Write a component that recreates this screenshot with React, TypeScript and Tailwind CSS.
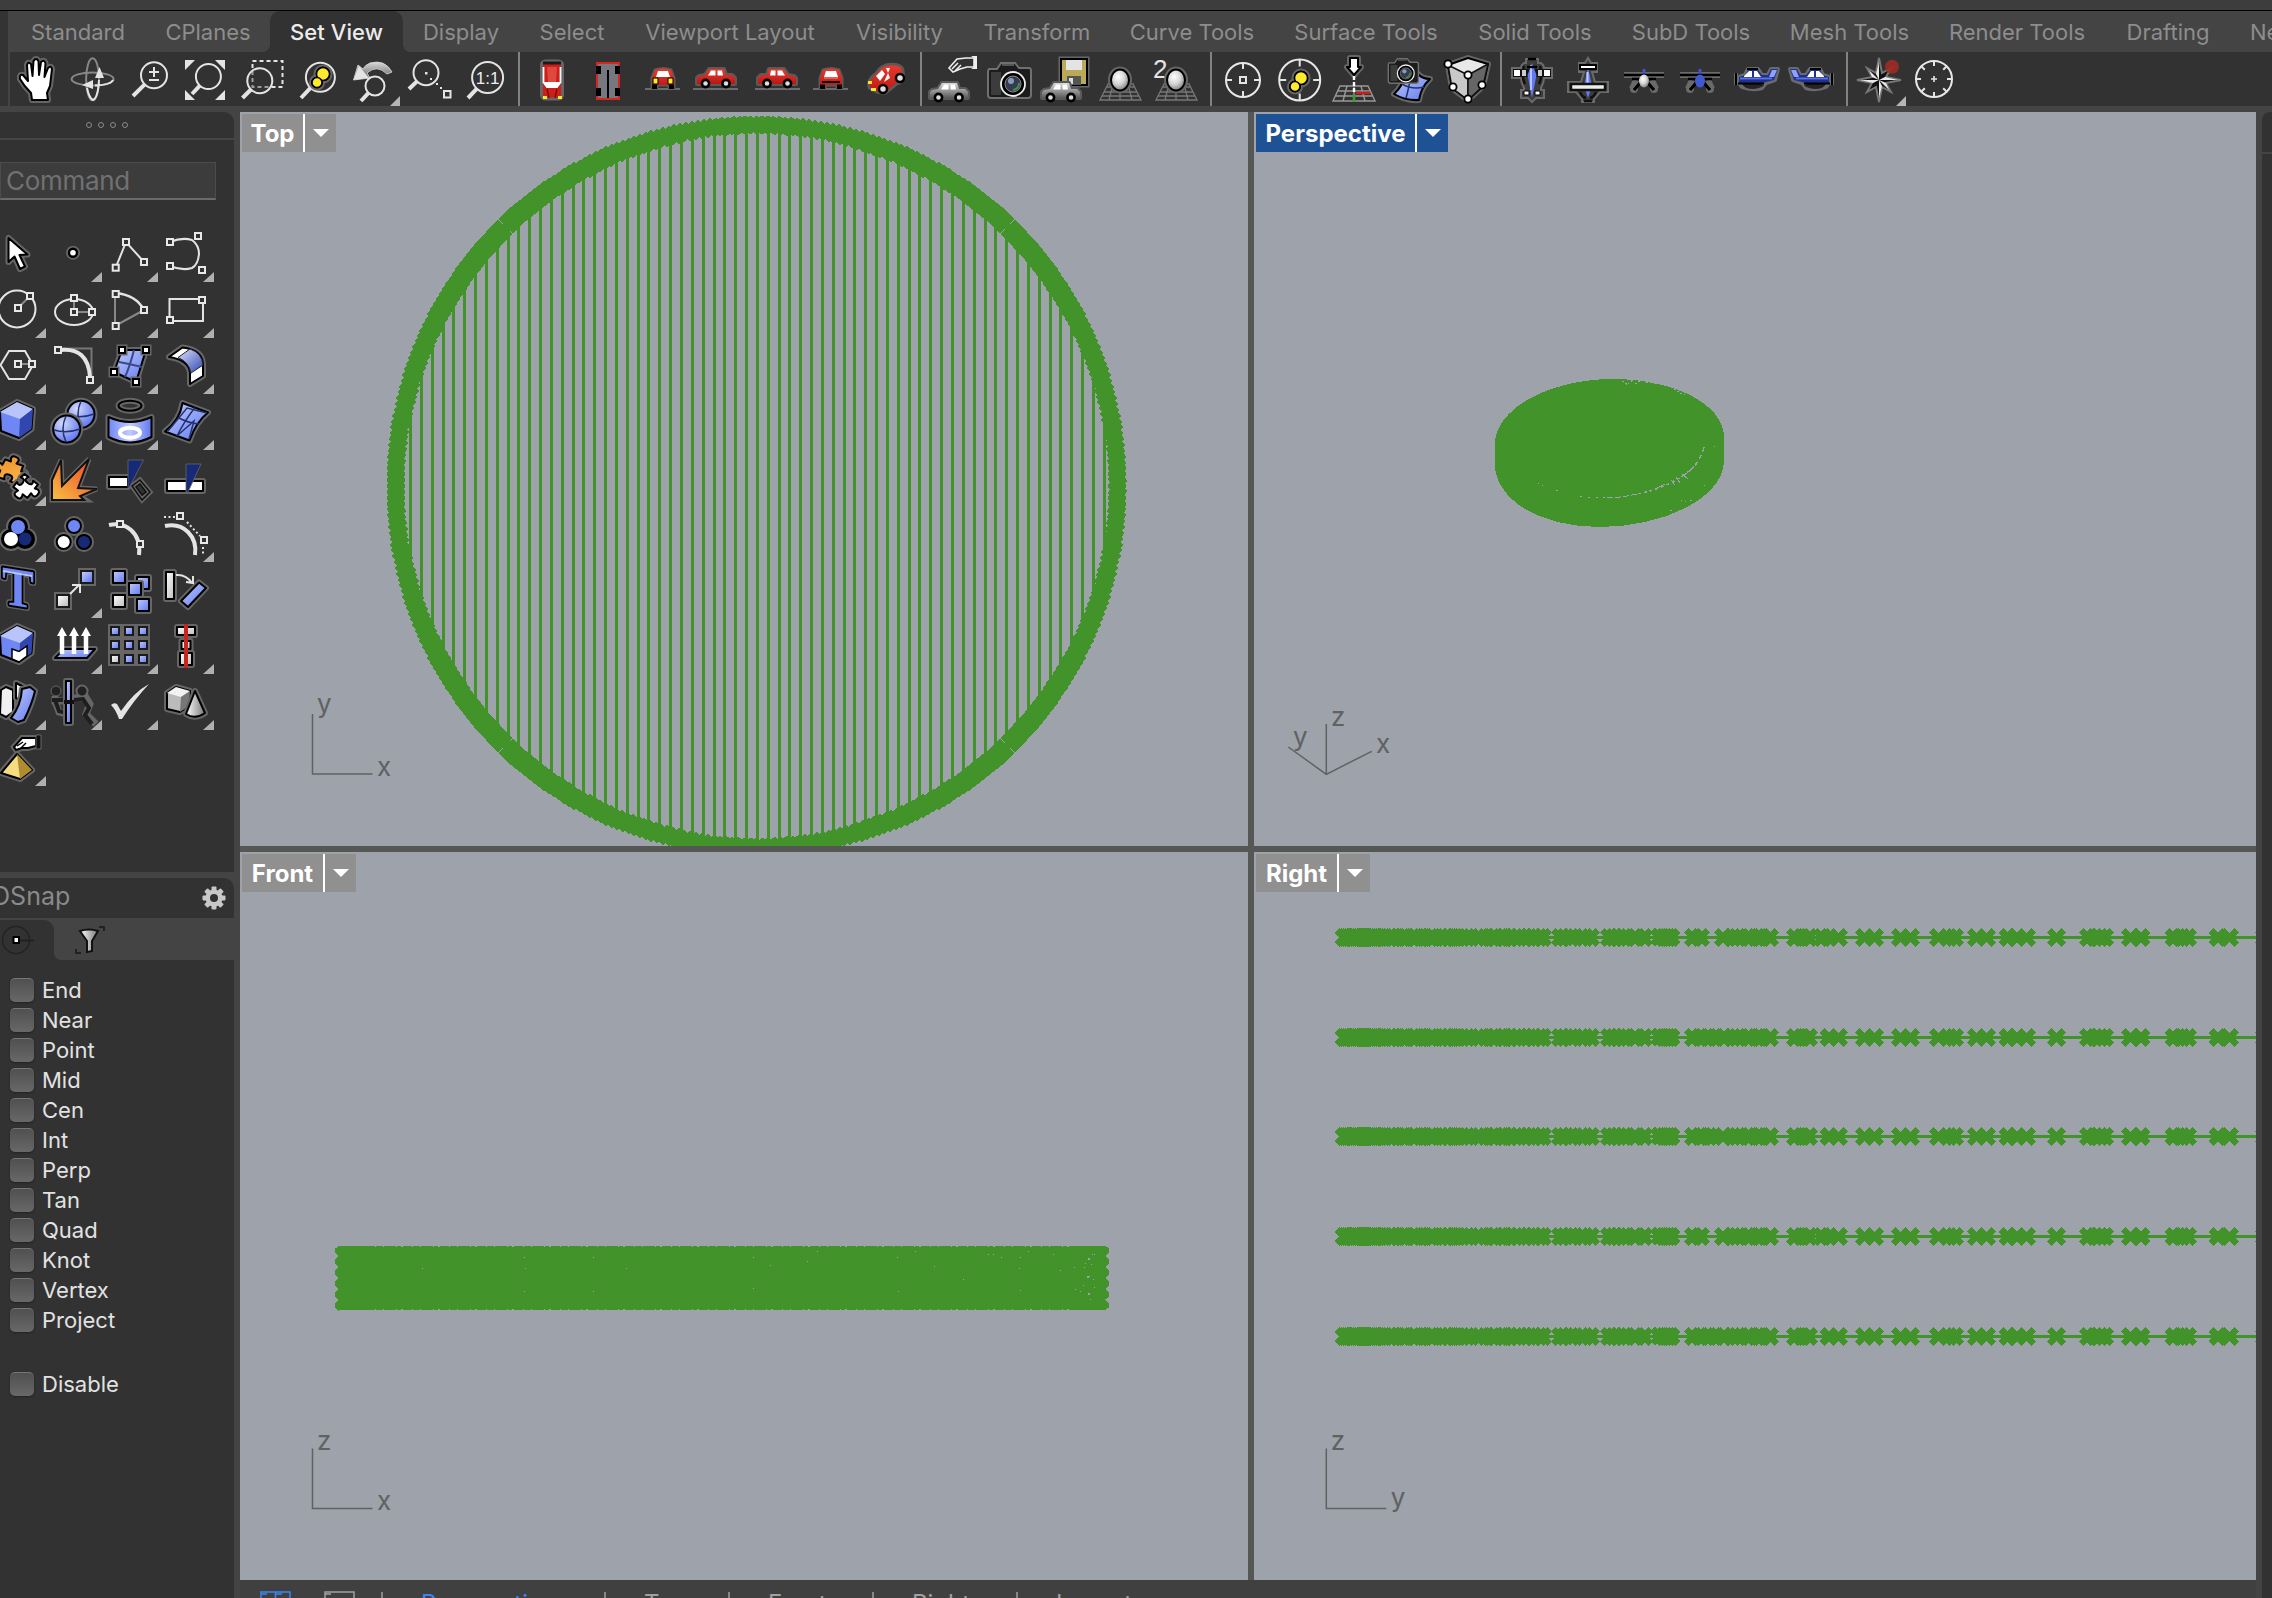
import React from "react";

const GREEN = "#429329";

/* ---------- drawing helpers ---------- */

function Defs() {
  return (
    <svg className="absolute h-0 w-0" aria-hidden="true">
      <defs>
        <linearGradient id="blue" x1="0" y1="0" x2="1" y2="1">
          <stop offset="0" stopColor="#c3ccfb" />
          <stop offset="1" stopColor="#5f79f2" />
        </linearGradient>
        <linearGradient id="blueH" x1="0" y1="0" x2="1" y2="0">
          <stop offset="0" stopColor="#6f87f5" />
          <stop offset="0.5" stopColor="#c3ccfb" />
          <stop offset="1" stopColor="#5f79f2" />
        </linearGradient>
        <linearGradient id="bend" x1="0" y1="0" x2="1" y2="1">
          <stop offset="0" stopColor="#dfe4fd" />
          <stop offset="1" stopColor="#2f46ae" />
        </linearGradient>
        <linearGradient id="red" x1="0" y1="0" x2="0" y2="1">
          <stop offset="0" stopColor="#ea3a30" />
          <stop offset="1" stopColor="#b81812" />
        </linearGradient>
        <linearGradient id="gray" x1="0" y1="0" x2="1" y2="1">
          <stop offset="0" stopColor="#ffffff" />
          <stop offset="1" stopColor="#bdbdbd" />
        </linearGradient>
        <linearGradient id="grayV" x1="0" y1="0" x2="0" y2="1">
          <stop offset="0" stopColor="#d8d8d8" />
          <stop offset="1" stopColor="#5a5a5a" />
        </linearGradient>
        <linearGradient id="cone" x1="0" y1="0" x2="1" y2="0">
          <stop offset="0" stopColor="#ffffff" />
          <stop offset="1" stopColor="#777777" />
        </linearGradient>
        <linearGradient id="fire" x1="1" y1="0" x2="0" y2="1">
          <stop offset="0" stopColor="#e8401c" />
          <stop offset="0.5" stopColor="#f08038" />
          <stop offset="1" stopColor="#f8c040" />
        </linearGradient>
        <linearGradient id="orange" x1="0" y1="0" x2="1" y2="1">
          <stop offset="0" stopColor="#f08a20" />
          <stop offset="1" stopColor="#f9bb55" />
        </linearGradient>
        <radialGradient id="ball" cx="0.4" cy="0.35" r="0.7">
          <stop offset="0" stopColor="#ffffff" />
          <stop offset="0.5" stopColor="#d6d6d6" />
          <stop offset="1" stopColor="#777777" />
        </radialGradient>
        <radialGradient id="sphere" cx="0.35" cy="0.3" r="0.75">
          <stop offset="0" stopColor="#d3daff" />
          <stop offset="1" stopColor="#5a73ee" />
        </radialGradient>
      </defs>
    </svg>
  );
}

/** Filled shape with a black outline and a soft gray halo. */
function O({ d, fill = "#fff", w = 2, t }: { d: string; fill?: string; w?: number; t?: string }) {
  return (
    <g transform={t} strokeLinejoin="round">
      <path d={d} fill="none" stroke="#666" strokeWidth={w + 4} />
      <path d={d} fill={fill} stroke="#000" strokeWidth={w} />
    </g>
  );
}

const circ = (x: number, y: number, r: number, ry = r) =>
  `M${x - r} ${y}A${r} ${ry} 0 1 1 ${x + r} ${y}A${r} ${ry} 0 1 1 ${x - r} ${y}Z`;
const box = (x: number, y: number, s: number, h = s) =>
  `M${x - s / 2} ${y - h / 2}h${s}v${h}h${-s}Z`;

function L({ d, c = "#e4e4e4", w = 2, dash }: { d: string; c?: string; w?: number; dash?: string }) {
  return <path d={d} fill="none" stroke={c} strokeWidth={w} strokeDasharray={dash} />;
}

/** Square control-point handles. */
function Sq({ p, fill = "#323232" }: { p: number[][]; fill?: string }) {
  return (
    <>
      {p.map(([x, y], i) => (
        <rect key={i} x={x - 3} y={y - 3} width="6" height="6" fill={fill} stroke="#e8e8e8" strokeWidth="2" />
      ))}
    </>
  );
}

function Lens({ x, y, r, hx, hy }: { x: number; y: number; r: number; hx: number; hy: number }) {
  const a = Math.atan2(hy - y, hx - x);
  return (
    <>
      <circle cx={x} cy={y} r={r} fill="none" stroke="#e4e4e4" strokeWidth="2" />
      <line x1={x + Math.cos(a) * r} y1={y + Math.sin(a) * r} x2={hx} y2={hy} stroke="#e4e4e4" strokeWidth="4" />
    </>
  );
}

/* ---------- toolbar icons (56 x 54) ---------- */

function SideCar({ t, c = "url(#red)", g = true }: { t?: string; c?: string; g?: boolean }) {
  return (
    <g transform={t}>
      {g && <path d="M1 37H46" stroke="#6c6c6c" strokeWidth="2" />}
      <path d="M5 26L7 24L13 23L17 17H32L34 23H40L43 26V32H5Z" fill={c} stroke="#5a5a5a" strokeWidth="4" strokeLinejoin="round" />
      <path d="M5 26L7 24L13 23L17 17H32L34 23H40L43 26V32H5Z" fill={c} />
      <path d="M16 23.500L19 18.500H23.500V23.500ZM25.500 18.500H30L31 23.500H25.500Z" fill="#fff" />
      <circle cx="13.500" cy="31.500" r="3.600" fill="#ddd" stroke="#000" strokeWidth="2.600" />
      <circle cx="34" cy="31.500" r="3.600" fill="#ddd" stroke="#000" strokeWidth="2.600" />
    </g>
  );
}

function GrayCar() {
  return <g transform="translate(2,14)"><SideCar c="url(#grayV)" g={false} /></g>;
}

function Camera({ t }: { t?: string }) {
  return (
    <g transform={t}>
      <path d="M10 17H18L22 11H36L40 16H50Q52 16 52 19V43Q52 46 49 46H12Q9 46 9 43V19Z" fill="#1c1c1c" stroke="#707070" strokeWidth="2" />
      <path d="M12 20H22V43H12Z" fill="#3c3c3c" />
      <path d="M23 13H35" stroke="#555" strokeWidth="2" />
      <circle cx="34" cy="32" r="12" fill="#000" stroke="#eee" strokeWidth="1.800" />
      <circle cx="34" cy="32" r="8" fill="#333d50" stroke="#888" />
      <circle cx="32" cy="29" r="3" fill="#8a9ab8" />
      <path d="M34 38Q40 37 40 31" stroke="#4a8a4a" strokeWidth="2" fill="none" />
    </g>
  );
}

function GridBall() {
  return (
    <>
      <path d="M17 32L9 48H50L42 32ZM13 40H46M11 44H48M16 35H43M22 32L18 48M29 32V48M37 32L41 48" fill="none" stroke="#777" strokeWidth="1.300" />
      <O d={circ(29, 28, 9, 10.5)} fill="url(#ball)" />
    </>
  );
}

function FrontCar({ back = false }: { back?: boolean }) {
  return (
    <>
      <path d="M10 37H45" stroke="#6c6c6c" strokeWidth="2" />
      <path d="M17 36V26L20 18Q28 15 36 18L39 26V36H34V33H22V36Z" fill="url(#red)" stroke="#5a5a5a" strokeWidth="3" strokeLinejoin="round" />
      <path d="M17 36V26L20 18Q28 15 36 18L39 26V36H34V33H22V36Z" fill="url(#red)" />
      <path d="M21 25L23 19H33L35 25Z" fill="#fff" />
      {back ? <path d="M19 30H37" stroke="#000" strokeWidth="2" /> : <path d="M18 26H23V32H18ZM33 26H38V32H33Z" fill="#ffe629" stroke="#000" />}
      {back && <path d="M21 26H35" stroke="#ff8b84" />}
      <path d="M17 32.500H22V37H17ZM34 32.500H39V37H34Z" fill="#000" />
    </>
  );
}

function FrontPlane({ c }: { c: string }) {
  return (
    <g>
      <path d="M8 23H48M20 28L16 37M36 28L40 37" stroke="#6a6a6a" strokeWidth="6" fill="none" />
      <circle cx="18" cy="37" r="4" fill="#6a6a6a" /><circle cx="38" cy="37" r="4" fill="#6a6a6a" />
      <path d="M28 17V24" stroke="#3f55c8" strokeWidth="3" />
      <path d="M8 23H48M16 27H40" stroke="#000" strokeWidth="2.400" />
      <path d="M24 31L18 38M32 31L38 38" stroke="#000" strokeWidth="3" />
      <ellipse cx="28" cy="29" rx="5" ry="6.500" fill={c} />
    </g>
  );
}

function SidePlane({ t }: { t?: string }) {
  return (
    <g transform={t}>
      <path d="M8 21V33M11 25L17 23L20 17H30L34 23H40L43 17H50L47 28L38 31L34 36Q24 39 14 35L11 31Z" fill="#1e1818" stroke="#6a6a6a" strokeWidth="4" strokeLinejoin="round" />
      <path d="M11 25L17 23L20 18H30L34 23H40L43 17H50L46 28L34 31H11Z" fill="#20308e" />
      <path d="M16 24L21 19H24V25H16ZM26 25V19H29L33 25Z" fill="#fff" />
      <path d="M12 26.500H44" stroke="#5a74ee" strokeWidth="1.800" />
      <path d="M44 18H49L46 25H41Z" fill="#8ea2fa" />
      <path d="M19 17H30M10 31.500H36" stroke="#000" strokeWidth="2" />
      <path d="M15 33H36Q34 36 25 37Q17 37 15 33Z" fill="#2a2222" />
      <path d="M8 21V33" stroke="#000" strokeWidth="2" />
    </g>
  );
}

const HAND = "M22 48L21 41Q14 34 10 27Q9 22 13 23L18 29L17 13Q18 9 21 12L22.5 24L23.5 9Q26 5 28.5 9L29 23L31 10Q34 7 35.5 11L34.5 25L38 16Q41 13 42 17L40 34L37 41L38 48Z";

const YELLOW = (dx: number, dy: number) => (
  <>
    <O d={circ(33 + dx, 21 + dy, 6.5)} fill="#ffe92e" />
    <O d={circ(27 + dx, 29.5 + dy, 5)} fill="#ffe92e" />
    <circle cx={33 + dx} cy={21 + dy} r="6.500" fill="#ffe92e" stroke="#000" strokeWidth="1.500" />
    <circle cx={27 + dx} cy={29.5 + dy} r="5" fill="#ffe92e" stroke="#000" strokeWidth="1.500" />
  </>
);

const ticks = (x: number, y: number, r: number, len: number, n: number) =>
  Array.from({ length: n }, (_, i) => {
    const a = (i * 2 * Math.PI) / n;
    return `M${x + Math.cos(a) * r} ${y + Math.sin(a) * r}L${x + Math.cos(a) * (r - len)} ${y + Math.sin(a) * (r - len)}`;
  }).join("");

const TOOL_GROUPS: { icon: React.ReactNode; more?: boolean }[][] = [
  [
    { icon: <O d={HAND} /> },
    {
      icon: (
        <>
          <ellipse cx="26.600" cy="27" rx="21" ry="6.500" fill="none" stroke="#888" strokeWidth="2" />
          <ellipse cx="26.600" cy="27.300" rx="6.500" ry="21" fill="none" stroke="#888" strokeWidth="2" />
          <path d="M47 28Q45 33 29 33.5M33 28Q32 46 27 48Q23 46 21 36" fill="none" stroke="#e4e4e4" strokeWidth="2" />
          <path d="M33.5 15L38 26H29ZM16 33L27 28V37Z" fill="#e4e4e4" />
        </>
      ),
    },
    { icon: <><Lens x={32} y={23.3} r={13} hx={11} hy={44} /><L d="M27 20H37M32 15V25M27 28H37" /></> },
    {
      icon: (
        <>
          <Lens x={30.4} y={24.5} r={12.5} hx={14} hy={42} />
          <path d="M7 8H17L7 18ZM47 8H37L47 18ZM7 48H17L7 38ZM47 48H37L47 38Z" fill="#e4e4e4" />
        </>
      ),
    },
    { icon: <><L d="M18.5 9H48.5V35H18.5Z" dash="4 3" /><circle cx="25.800" cy="28.700" r="12.500" fill="#323232" fillOpacity="0.4" /><Lens x={25.8} y={28.7} r={12.5} hx={8.5} hy={46} /></> },
    { icon: <><Lens x={30.4} y={25.3} r={14.5} hx={11} hy={46} />{YELLOW(0, 1)}</> },
    {
      more: true,
      icon: (
        <>
          <path d="M46 20Q39 7 24 11Q19 13 17 17L12 13L7.5 28L24 26L21 21Q31 12 41 22Z" fill="url(#grayV)" stroke="#ddd" strokeWidth="0.800" />
          <path d="M13 14L7.5 28L23 26Z" fill="#e4e4e4" />
          <Lens x={29} y={34} r={9.5} hx={15} hy={49} />
        </>
      ),
    },
    { icon: <><Lens x={24} y={20.7} r={12.5} hx={7} hy={37} /><path d="M23 20h2.5v2.5h-2.5ZM28 26h2v2h-2ZM34 31h2v2h-2ZM38 35h2v2h-2Z" fill="#e4e4e4" /><L d="M42 39H48.5V45.5H42Z" /></> },
    {
      icon: (
        <>
          <Lens x={29.6} y={25.5} r={15.5} hx={10} hy={46} />
          <text x="29.600" y="32" textAnchor="middle" fontSize="17" fontFamily="Liberation Sans, sans-serif" fill="#eee">1:1</text>
        </>
      ),
    },
  ],
  [
    {
      icon: (
        <>
          <rect x="18.500" y="9" width="21" height="38" rx="4" fill="#cc1f18" stroke="#666" strokeWidth="3" />
          <path d="M20 9.500H38V12.500H20Z" fill="#1a1a1a" />
          <path d="M20.500 15V30M37.500 15V30M21 31L24 35H34L37 31Z" stroke="#fff" strokeWidth="1.800" fill="#fff" />
          <path d="M24 15H34L33 30H25Z" fill="#e0483f" />
          <path d="M24 37L26 46M34 37L32 46" stroke="#7a100c" strokeWidth="1.500" />
          <path d="M20 44h4v3h-4ZM35 44h4v3h-4Z" fill="#ffe629" />
        </>
      ),
    },
    {
      icon: (
        <>
          <rect x="18" y="11" width="22" height="36" fill="#77777f" stroke="#d8261c" strokeWidth="2" />
          <path d="M29 18V46" stroke="#000" strokeWidth="2" />
          <path d="M17 14h5v8h-5ZM36 14h5v8h-5ZM17 36h5v8h-5ZM36 36h5v8h-5Z" fill="#000" />
        </>
      ),
    },
    { icon: <FrontCar /> },
    { icon: <SideCar t="translate(1,0)" /> },
    { icon: <SideCar t="translate(54,0) scale(-1,1)" /> },
    { icon: <FrontCar back /> },
    {
      icon: (
        <>
          <path d="M10 36Q7 28 17 21Q22 12 33 12Q42 12 44 17L45 26Q43 31 38 32L27 41Q20 43 10 36Z" fill="url(#red)" stroke="#5a5a5a" strokeWidth="2.500" />
          <path d="M17 24L23 18L26 22L21 29ZM25 30L29 21L31 16H27L31 26Z" fill="#fff" />
          <circle cx="24" cy="37" r="4" fill="#ddd" stroke="#000" strokeWidth="2.500" />
          <circle cx="41" cy="26" r="4" fill="#ddd" stroke="#000" strokeWidth="2.500" />
          <path d="M9 29h4v3h-4ZM12 36h5v3h-5Z" fill="#ffe629" />
        </>
      ),
    },
  ],
  [
    { icon: <><GrayCar /><path d="M26 16L34 7L43 6H51V15H44L37 17L30 20ZM29 17L35 11M32 19L38 13" fill="#323232" stroke="#eee" strokeWidth="1.600" /><path d="M48 4H54V17H48L51 15V6Z" fill="#eee" /></> },
    { icon: <Camera /> },
    {
      icon: (
        <>
          <path d="M26 7H52V33H26Z" fill="#b5a84c" stroke="#666" strokeWidth="5" />
          <path d="M26 7H52V33H26Z" fill="#b8aa58" stroke="#000" strokeWidth="2" />
          <path d="M31 8H47V18H31Z" fill="#e4e4e4" />
          <path d="M32 24H46V33H32Z" fill="#555" /><path d="M34 26H38V32H34Z" fill="#ddd" />
          <GrayCar />
        </>
      ),
    },
    { icon: <GridBall /> },
    { icon: <><text x="6" y="26" fontSize="26" fontFamily="Liberation Sans, sans-serif" fill="#e4e4e4">2</text><GridBall /></> },
  ],
  [
    { icon: <><circle cx="29" cy="28" r="17" fill="none" stroke="#e8e8e8" strokeWidth="2" /><L d={ticks(29, 28, 17, 6, 4)} /><L d={box(29, 28, 6)} /></> },
    { icon: <>{YELLOW(-2, 5)}<circle cx="29.700" cy="28" r="20.500" fill="none" stroke="#e8e8e8" strokeWidth="2" /><L d={ticks(29.7, 28, 20.5, 7, 4)} /></> },
    {
      icon: (
        <>
          <path d="M14 34H42L49 49H7ZM12 39H44M10 44H46M21 34L17 49M28 34V49M35 34L39 49" fill="none" stroke="#999" strokeWidth="1.400" />
          <O d="M24 6H32V15H35L28 23L21 15H24Z" />
          <path d="M28 24V41" stroke="#fff" strokeWidth="2.400" strokeDasharray="4 2" />
          <path d="M30 41H44" stroke="#c42018" strokeWidth="2.600" /><path d="M28 42V50" stroke="#3f9c28" strokeWidth="2.600" />
        </>
      ),
    },
    {
      icon: (
        <>
          <O d="M23 22L35 21Q40 27 48 27Q39 35 37 48Q24 49 12 42Q21 34 23 22Z" fill="url(#blue)" />
          <path d="M29 22Q27 36 24 46M20 32Q30 38 42 35" stroke="#22326e" strokeWidth="1.600" fill="none" />
          <Camera t="translate(0,-1) scale(0.7)" />
        </>
      ),
    },
    {
      icon: (
        <>
          <O d="M10 13L30 6L50 12L45 34L30 48L14 36Z" fill="#e8e8e8" />
          <path d="M10 13L30 23L30 48L14 36Z" fill="#c9c9c9" stroke="#111" strokeWidth="1.500" />
          <path d="M50 12L30 23V48L45 34Z" fill="#666" stroke="#111" strokeWidth="1.500" />
          {[[10, 12], [30, 23], [15, 35], [44, 33], [30, 47]].map(([x, y], i) => (
            <circle key={i} cx={x} cy={y} r="3.600" fill="#fff" stroke="#000" strokeWidth="1.800" />
          ))}
        </>
      ),
    },
  ],
  [
    {
      icon: (
        <>
          <path d="M22 7H34V11H37Q40 13 40 16H48V26H40Q40 31 37 36V38H40V46H32L28 50L24 46H17V38H20V36Q17 31 17 26H8V16H17Q17 13 20 11H22Z" fill="#3c3c3c" stroke="#6a6a6a" strokeWidth="2" />
          <path d="M20 14Q17 24 21 32M36 14Q39 24 35 32" stroke="#111" strokeWidth="2.500" fill="none" />
          <path d="M10 18H46V24H10Z" fill="#111" stroke="#111" strokeWidth="2" />
          <path d="M10 18H16V24H10ZM40 18H46V24H40Z" fill="#fff" /><path d="M18 18H22V24H18ZM34 18H38V24H34Z" fill="#ccc" />
          <path d="M28 11L32.500 23L28 46L23.500 23Z" fill="#5f79f2" /><path d="M27 13V38" stroke="#c3ccfb" strokeWidth="1.800" />
          <path d="M24 7H32M23 15H33" stroke="#000" strokeWidth="2.500" />
          <path d="M20 39H25V43H20ZM31 39H36V43H31Z" fill="#fff" stroke="#000" />
        </>
      ),
    },
    {
      icon: (
        <>
          <path d="M28 6L31 11H37V20H32L35 30H48V40H40L34 47V50H22V47L16 40H8V30H21L24 20H19V11H25Z" fill="#3c3c3c" stroke="#6a6a6a" strokeWidth="2" />
          <path d="M28 15L32 34L28 46L24 34Z" fill="#5f79f2" /><path d="M27.500 20V32" stroke="#c3ccfb" strokeWidth="2" />
          <path d="M20 13H36V17H20Z" fill="#fff" stroke="#000" strokeWidth="2" />
          <path d="M11 32H45V38H11Z" fill="#eceee8" stroke="#111" strokeWidth="2.500" />
          <path d="M20 40Q22 45 26 46M36 40Q34 45 30 46M24 49H32" stroke="#111" strokeWidth="2.500" fill="none" />
        </>
      ),
    },
    { icon: <FrontPlane c="url(#ball)" /> },
    { icon: <FrontPlane c="#4058d0" /> },
    { icon: <SidePlane /> },
    { icon: <SidePlane t="translate(56,0) scale(-1,1)" /> },
  ],
  [
    {
      more: true,
      icon: (
        <>
          <path d="M27 6L30 21L39 16L34 25L49 28L34 31L39 40L30 35L27 50L24 35L15 40L20 31L5 28L20 25L15 16L24 21Z" fill="#111" stroke="#777" strokeWidth="2" />
          <path d="M27 10V28L24 22ZM27 46V28L30 34ZM8 28H27L21 31ZM46 28H27L33 25ZM17 18L27 28L20 25ZM37 38L27 28L34 31Z" fill="#e8e8e8" />
          <circle cx="40" cy="14.700" r="7" fill="#a02a24" fillOpacity="0.9" />
        </>
      ),
    },
    { icon: <><circle cx="26" cy="27" r="18" fill="none" stroke="#e8e8e8" strokeWidth="2" /><L d={ticks(26, 27, 18, 5, 8)} /><L d="M23 27H29M26 24V30" w={1.6} /></> },
  ],
];

/* ---------- side palette icons (56 x 56) ---------- */

const CUBE = (
  <>
    <O d="M27 8L43 15L41.500 35L29 44L11 37L10 18Z" fill="#6f87f5" />
    <path d="M27 8L43 15L30 25L10 18Z" fill="#b9c4fb" />
    <path d="M43 15L41.500 35L29 44L30 25Z" fill="#3147ad" />
  </>
);

const PALETTE: { icon: React.ReactNode; more: boolean }[] = [
  { more: false, icon: <O d="M18.500 12V36L24.500 30.500L30 43L35 40.500L29.500 29L37.500 28.500Z" /> },
  { more: true, icon: <><circle cx="27" cy="26.700" r="7" fill="#666" /><circle cx="27" cy="26.700" r="4" fill="#fff" stroke="#000" strokeWidth="2.400" /></> },
  { more: true, icon: <><L d="M13.700 41.700L24 16L42 36" /><Sq p={[[13.7, 41.7], [24, 16], [42, 36]]} /></> },
  { more: true, icon: <><L d="M12 16Q24 11 34 14Q41 19 41 28Q40 39 34 42Q24 45 12 40" /><Sq p={[[12, 16], [40, 10], [12, 40], [44, 44]]} /></> },

  { more: true, icon: <><L d={circ(27, 27, 18.5)} /><L d="M28 26L40 14" c="#888" /><Sq p={[[28, 26], [40, 14]]} /></> },
  { more: true, icon: <><L d={circ(28, 30, 19, 13)} /><L d="M28 16V30H46" c="#888" /><Sq p={[[28, 16], [28, 30], [46, 30]]} /></> },
  { more: true, icon: <><L d="M13 12V44L42 28" c="#888" /><L d="M14 11Q34 13 42 28" w={2.4} /><Sq p={[[13.7, 12], [42, 28], [13.7, 44]]} /></> },
  { more: true, icon: <><L d="M11.500 17H45V39H11.500Z" /><Sq p={[[44, 18], [12, 38]]} /></> },

  { more: true, icon: <><L d="M10.500 27L19 13H35L43 27L35 41H19Z" /><L d="M28 26H42" c="#888" /><Sq p={[[28, 26], [42, 26]]} /></> },
  { more: true, icon: <><L d="M14 10.500H45.500V42" c="#777" /><L d="M14 12Q42 9 44 39" w={4} /><Sq p={[[12, 12], [44, 42]]} /></> },
  {
    more: true,
    icon: (
      <>
        <O d="M20 12H44L34 44L12 34Z" fill="url(#blue)" />
        <path d="M32 12Q28 28 23 39M17 24Q28 26 40 29" stroke="#3b4a86" strokeWidth="2" fill="none" />
        {[[20, 12], [44, 12], [34, 44], [12, 34]].map(([x, y], i) => (
          <g key={i}><rect x={x - 5.5} y={y - 5.5} width="11" height="11" fill="#666" /><rect x={x - 3} y={y - 3} width="6" height="6" fill="#fff" stroke="#000" strokeWidth="2" /></g>
        ))}
      </>
    ),
  },
  {
    more: true,
    icon: (
      <>
        <O d="M11 19L24.500 9.500Q45 12 45 27V38L32 46V35Q31 22 11 19Z" />
        <path d="M20 19.500L32 11Q44 15 45 27L33 35Q31 24 20 19.500Z" fill="url(#bend)" stroke="#223" />
      </>
    ),
  },

  { more: true, icon: CUBE },
  {
    more: true,
    icon: (
      <>
        <O d={circ(35, 20.3, 13.5)} fill="url(#sphere)" />
        <path d="M35 7Q29 20 35 34M22 21Q35 25 48 20" stroke="#22326e" strokeWidth="1.500" fill="none" />
        <O d={circ(20.7, 35, 13.5)} fill="url(#sphere)" />
        <path d="M20 22Q14 35 20 48M8 36Q20 40 34 35" stroke="#22326e" strokeWidth="1.500" fill="none" />
      </>
    ),
  },
  {
    more: true,
    icon: (
      <>
        <path d={circ(28, 11.7, 11.5, 5)} fill="none" stroke="#666" strokeWidth="6" />
        <path d={circ(28, 11.7, 11.5, 5)} fill="none" stroke="#000" strokeWidth="2" />
        <O d="M6.500 23Q28 33 49.500 23V43Q28 54 6.500 43Z" fill="url(#blueH)" />
        <path d={circ(28, 38.7, 10, 5)} fill="none" stroke="#fff" strokeWidth="4" />
      </>
    ),
  },
  {
    more: true,
    icon: (
      <>
        <O d="M24.500 9L50 18.500Q38 28 31.500 46.500L7 37.500Q22 26 24.500 9Z" fill="url(#blue)" />
        <path d="M37 13.500Q27 26 19 42M20 23.500Q30 29 41 30M10 37L29 14L49 19M20 41L36 27L31 45" stroke="#22326e" strokeWidth="1.500" fill="none" />
      </>
    ),
  },

  {
    more: true,
    icon: (
      <>
        <O t="rotate(20 21 20)" d="M12 12H18Q15 6 21 6Q27 6 24 12H31V18Q37 15 37 21Q37 27 31 24V31H24Q27 25 21 25Q15 25 18 31H11V24Q5 27 5 21Q5 15 11 18Z" fill="url(#orange)" />
        <O t="translate(15.5,15.5) rotate(38 21 19)" d="M13 12H18Q15 17 21 17Q27 17 24 12H30V17Q36 14 36 20Q36 26 30 23V29H24Q27 35 21 35Q15 35 18 29H12V23Q17 26 17 20Q17 15 12 17Z" />
      </>
    ),
  },
  { more: false, icon: <><path d="M6 30L15 10L16 36L43 9L32 38L51 39L34 46L40 50H6Z" fill="none" stroke="#666" strokeWidth="5" /><path d="M6 30L15 10L16 36L43 9L32 38L51 39L34 46L38 50H6Z" fill="url(#fire)" stroke="#111" strokeWidth="2" /></> },
  {
    more: false,
    icon: (
      <>
        <O d="M7 27H26V37H7Z" />
        <path d="M30 36L38 30L48 42L40 50Z" fill="none" stroke="#666" strokeWidth="5" /><path d="M30 36L38 30L48 42L40 50ZM34 37L38 34L44 42L40 45Z" fill="none" stroke="#111" strokeWidth="1.500" />
        <path d="M26 10H41.500L27 38H26Z" fill="#172a78" stroke="#666" strokeWidth="0.800" />
      </>
    ),
  },
  { more: false, icon: <><O d="M9 31H45V41H9Z" w={2} /><path d="M28 14H43L30 42H28Z" fill="#172a78" stroke="#666" strokeWidth="0.800" /></> },

  {
    more: true,
    icon: (
      <>
        <path d={circ(28, 21, 9) + circ(21, 33, 9) + circ(35, 33, 9)} fill="#000" stroke="#666" strokeWidth="6" />
        <path d={circ(28, 21, 9) + circ(21, 33, 9) + circ(35, 33, 9)} fill="#000" stroke="#000" strokeWidth="2" />
        <circle cx="35" cy="33" r="6.500" fill="#172a78" /><circle cx="21" cy="33" r="7" fill="#fff" /><circle cx="28" cy="21" r="7" fill="#6f87f5" />
      </>
    ),
  },
  { more: false, icon: <><O d={circ(28, 20, 7)} fill="#6f87f5" /><O d={circ(17.7, 36, 7)} /><O d={circ(38, 36, 7)} fill="#172a78" /></> },
  { more: false, icon: <><L d="M7 19Q20 16 29 24Q39 33 37 49" w={4} /><Sq p={[[18, 18], [38, 38]]} /></> },
  { more: true, icon: <><L d="M7 20Q21 17 30 26Q39 35 37 49" w={4} /><L d="M6 11H18M29 16L42 30M45 41V50" dash="2 2.500" /><Sq p={[[22, 10], [46, 34]]} /></> },

  {
    more: false,
    icon: (
      <g fontFamily="Liberation Serif, serif" fontWeight="700" fontSize="48" strokeLinejoin="round">
        <text transform="translate(12,41.5) skewY(9) scale(1,1.15)" fill="none" stroke="#666" strokeWidth="6">T</text>
        <text transform="translate(12,41.5) skewY(9) scale(1,1.15)" fill="#6f87f5" stroke="#000" strokeWidth="3.500" paintOrder="stroke">T</text>
        <path d="M13 9L42 14" stroke="#b9c4fb" strokeWidth="2" />
      </g>
    ),
  },
  {
    more: true,
    icon: (
      <>
        <path d="M32 6H50V24H32ZM8 30H26V48H8Z" fill="#666" /><path d="M34 8H48V22H34ZM10 32H24V46H10Z" fill="#1a1a1a" />
        <path d="M36 10H46V20H36Z" fill="url(#blue)" /><path d="M12 34H22V44H12Z" fill="url(#gray)" />
        <L d="M24 32L33 23M26 23H34V31" />
      </>
    ),
  },
  {
    more: false,
    icon: (
      <>
        {[[17, 15, 1], [41, 21, 1], [17, 39, 0], [41, 43, 1], [33, 27, 1]].map(([x, y, b], i) => (
          <O key={i} d={box(x, y, 12)} fill={b ? "url(#blue)" : "url(#gray)"} />
        ))}
      </>
    ),
  },
  { more: false, icon: <><O d="M8 10H16V37H8Z" fill="url(#gray)" /><O d="M41 20.500L48 26L30 45L23 39Z" fill="url(#blue)" /><L d="M18 13Q28 12 34 21M28 20L35 21L35 14" /></> },

  { more: true, icon: <>{CUBE}<path d="M22 31L29 33.500L37 28V38L29 44L22 41Z" fill="#fff" stroke="#000" strokeWidth="1.500" /></> },
  {
    more: true,
    icon: (
      <>
        <O d="M18 31H49L41 40H9Z" fill="url(#blue)" />
        <path d="M16 17V36M28 17V36M40 17V36" stroke="#fff" strokeWidth="4.500" /><path d="M16 9L21 18H11ZM28 9L33 18H23ZM40 9L45 18H35Z" fill="#fff" />
      </>
    ),
  },
  {
    more: true,
    icon: (
      <>
        <rect x="6" y="6" width="42" height="42" fill="#666" />
        {[0, 1, 2].flatMap((r) => [0, 1, 2].map((c) => (
          <rect key={`${r}${c}`} x={9 + c * 14} y={9 + r * 14} width="8" height="8" fill={r === 2 && c === 0 ? "url(#gray)" : "url(#blue)"} stroke="#1a1a1a" strokeWidth="2" />
        )))}
      </>
    ),
  },
  {
    more: true,
    icon: (
      <>
        <O d={box(28, 13, 18, 8)} fill="url(#gray)" /><O d={box(28, 27, 9, 8)} fill="url(#gray)" /><O d={box(28, 41, 12, 12)} fill="url(#gray)" />
        <rect x="26" y="6" width="4" height="44" fill="#c7261c" />
      </>
    ),
  },

  {
    more: true,
    icon: (
      <>
        <O d="M11 16L16 13L23 16V38L16 43L10 40Z" fill="#f0f0f0" />
        <O d="M26 9L36 14L30 26L26 24Z" fill="#f0f0f0" />
        <O d="M32 15L40 13L45 17Q42 30 34 46L28 48L21 44Q31 32 32 15Z" fill="url(#blue)" />
      </>
    ),
  },
  {
    more: true,
    icon: (
      <>
        <g fill="none" stroke="#666" strokeWidth="7"><path d="M9 22V27L20 27M9 27L13 38L22 40L20 50" /><path d="M38 20L44 30L40 40L50 50M38 24H24" /></g>
        <circle cx="10" cy="17" r="5" fill="#222" stroke="#666" /><circle cx="36" cy="17" r="5.500" fill="#222" stroke="#666" strokeWidth="2" />
        <g fill="none" stroke="#1e1e1e" strokeWidth="4"><path d="M6 26H20M9 26L13 37L21 39L18 50" /><path d="M28 26L37 25L43 34L39 41L46 50" /></g>
        <O d="M20 7H25V49H20Z" fill="url(#blue)" />
        <path d="M18 28H28" stroke="#111" strokeWidth="4" />
      </>
    ),
  },
  { more: true, icon: <path d="M9 31Q12 28 15 30L19 37Q32 18 47 10Q32 26 20 45L17 45Q14 36 9 31Z" fill="#e4e4e4" /> },
  {
    more: true,
    icon: (
      <>
        <O d="M9 19L18 13L32 17L31 32L22 38L9 35Z" fill="#bbb" />
        <path d="M9 19L18 13L32 17L23 23Z" fill="#f2f2f2" /><path d="M32 17L31 32L22 38L23 23Z" fill="#777" />
        <O d="M37 17L47 39Q37 46 28 40Z" fill="url(#cone)" />
      </>
    ),
  },

  {
    more: true,
    icon: (
      <>
        <path d="M24 17L32 8H46V16L38 18L32 18L26 20Z" fill="#fff" stroke="#666" strokeWidth="6" />
        <path d="M24 17L32 8H46V16L38 18L32 18L26 20Z" fill="#fff" stroke="#000" strokeWidth="2" /><path d="M27 16L33 12M31 18L36 13" stroke="#000" strokeWidth="1.500" />
        <path d="M46 5H51V19H46Z" fill="#111" stroke="#666" />
        <O d="M27 24L42 40L30 49L11 43Z" fill="#f6dc80" /><path d="M27 24L42 40L30 49Z" fill="#b08c30" />
      </>
    ),
  },
];

/* ---------- chrome ---------- */

const TABS: [string, string][] = [
  ["Standard", "w-[136px]"],
  ["CPlanes", "w-[124px]"],
  ["Set View", "w-[133px]"],
  ["Display", "w-[116px]"],
  ["Select", "w-[106px]"],
  ["Viewport Layout", "w-[210px]"],
  ["Visibility", "w-[129px]"],
  ["Transform", "w-[146px]"],
  ["Curve Tools", "w-[164px]"],
  ["Surface Tools", "w-[184px]"],
  ["Solid Tools", "w-[154px]"],
  ["SubD Tools", "w-[158px]"],
  ["Mesh Tools", "w-[159px]"],
  ["Render Tools", "w-[176px]"],
  ["Drafting", "w-[126px]"],
];

const GROUP_MARGIN = ["", "ml-1 pl-[3px]", "ml-[5px] pl-[1px]", "ml-[7px] pl-[2px]", "ml-[6px] pl-[2px]", "ml-[6px] pl-1"];

function Corner() {
  return <path d="M54 44V54H44Z" fill="#b5b5b5" />;
}

function TabBar() {
  return (
    <div className="flex h-[41px] bg-[#444444]">
      {TABS.map(([name, width]) => {
        const active = name === "Set View";
        return (
          <div
            key={name}
            className={`${width} relative flex shrink-0 items-center justify-center whitespace-nowrap pt-px text-[22px] ${
              active ? "rounded-t-[10px] bg-[#323232] font-medium tracking-[0.1px] text-[#ececec]" : "text-[#8d8d8d]"
            }`}
          >
            {active && (
              <>
                <span className="absolute -left-[8px] bottom-0 h-2 w-2 bg-[radial-gradient(circle_at_0_0,#444444_8px,#323232_8px)]" />
                <span className="absolute -right-[8px] bottom-0 h-2 w-2 bg-[radial-gradient(circle_at_100%_0,#444444_8px,#323232_8px)]" />
              </>
            )}
            {name}
          </div>
        );
      })}
      <div className="flex shrink-0 items-center whitespace-nowrap pl-[19px] pt-px text-[22px] text-[#8d8d8d]">New in V8</div>
    </div>
  );
}

function Toolbar() {
  return (
    <div className="flex h-[54px] bg-[#323232]">
      {TOOL_GROUPS.map((group, g) => (
        <div key={g} className={`${GROUP_MARGIN[g]} flex ${g ? "border-l-2 border-[#828282]" : ""}`}>
          {group.map((tool, i) => (
            <svg key={i} className="h-[54px] w-14" viewBox="0 0 56 54">
              {tool.icon}
              {tool.more && <Corner />}
            </svg>
          ))}
        </div>
      ))}
    </div>
  );
}

function CommandPanel() {
  return (
    <section className="h-[760px] shrink-0 rounded-tr-[10px] bg-[#323232]">
      <div className="flex h-[26px] items-center gap-[6px] pl-[86px]">
        {[0, 1, 2, 3].map((i) => (
          <span key={i} className="h-[6px] w-[6px] rounded-full border-[1.500px] border-[#8a8a8a]" />
        ))}
      </div>
      <div className="h-[2px] bg-[#444444]" />
      <div className="mt-[22px] flex h-[38px] w-[216px] items-center border border-b-2 border-[#4c4c4c] border-b-[#6a6a6a] bg-[#3c3c3c] pl-[5px] text-[26px] tracking-[-0.3px] text-[#717171]">
        Command
      </div>
      <div className="-ml-[10px] mt-[26px] grid w-[224px] grid-cols-4">
        {PALETTE.map((tool, i) => (
          <svg key={i} className="h-14 w-14" viewBox="0 0 56 56">
            {tool.icon}
            {tool.more && <path d="M56 46V56H45Z" fill="#b0b0b0" />}
          </svg>
        ))}
      </div>
    </section>
  );
}

const SNAPS = ["End", "Near", "Point", "Mid", "Cen", "Int", "Perp", "Tan", "Quad", "Knot", "Vertex", "Project"];

function Check({ label }: { label: string }) {
  return (
    <label className="flex h-[30px] items-center gap-2 pl-[10px] text-[22px] text-[#e2e2e2]">
      <span className="h-6 w-6 rounded-[5px] border-t border-[#777] bg-gradient-to-b from-[#505050] to-[#686868] shadow-[0_1px_2px_#222]" />
      {label}
    </label>
  );
}

function OsnapPanel() {
  return (
    <section className="mt-[6px] flex-1 bg-[#444444]">
      <div className="flex h-10 items-center justify-between rounded-tr-[10px] bg-[#323232] pr-2">
        <span className="-ml-[9px] pb-[4px] text-[25px] leading-none text-[#8a8a8a]">OSnap</span>
        <svg className="h-6 w-6" viewBox="-12 -12 24 24">
          {[0, 45, 90, 135].map((a) => (
            <rect key={a} x="-2.500" y="-11.500" width="5" height="23" rx="1" fill="#c8c8c8" transform={`rotate(${a})`} />
          ))}
          <circle r="6.300" fill="#323232" stroke="#c8c8c8" strokeWidth="4.600" />
        </svg>
      </div>
      <div className="mt-[2px] flex h-10">
        <div className="relative w-[54px] rounded-tr-[10px] bg-[#323232]">
          <span className="absolute -right-[8px] bottom-0 h-2 w-2 bg-[radial-gradient(circle_at_100%_0,#444444_8px,#323232_8px)]" />
          <svg className="h-10 w-[54px]" viewBox="0 0 54 40">
            <circle cx="16" cy="20" r="13.500" fill="none" stroke="#242424" strokeWidth="1.600" />
            <path d="M16 20.500H34" stroke="#202020" strokeWidth="1.800" />
            <rect x="13.500" y="17" width="5.500" height="6" fill="#fff" stroke="#000" strokeWidth="2" />
          </svg>
        </div>
        <svg className="ml-[18px] h-10 w-9" viewBox="72 0 36 40">
          <path d="M80 11Q89 8 98 11L92 21V31L87 32V21Z" fill="url(#cone)" stroke="#111" strokeWidth="2" />
          <path d="M99 7H104V11M76 29V33H81" fill="none" stroke="#222" strokeWidth="2" />
        </svg>
      </div>
      <div className="h-[640px] bg-[#323232] pt-[15px]">
        {SNAPS.map((s) => (
          <Check key={s} label={s} />
        ))}
        <div className="h-[34px]" />
        <Check label="Disable" />
      </div>
    </section>
  );
}

/* ---------- viewports ---------- */

function Title({ text, active = false, className }: { text: string; active?: boolean; className: string }) {
  return (
    <div className={`absolute left-[2px] top-[2px] flex h-[38px] ${className} ${active ? "bg-[#1f5294]" : "bg-[#909090]"} text-[24px] font-bold text-white`}>
      <div className="flex flex-1 items-center justify-center border-r-2 border-white pt-[2px]">{text}</div>
      <div className="flex w-[31px] items-center justify-center">
        <svg className="h-2 w-4" viewBox="0 0 16 8">
          <path d="M0 0H16L8 8Z" fill="#fff" />
        </svg>
      </div>
    </div>
  );
}

/** Diagonal cross marker path centred at x, y. */
const cross = (x: number, y: number) => `M${x - 7.2} ${y - 7.2}l14.4 14.4M${x + 7.2} ${y - 7.2}l-14.4 14.4`;

function Letter({ x, y, children }: { x: number; y: number; children: string }) {
  return (
    <text x={x} y={y} fontSize="26" fontFamily="Inter, sans-serif" fill="#606162">
      {children}
    </text>
  );
}

function Axes({ v, h, x, y, vy }: { v: string; h: string; x: number; y: number; vy: number }) {
  return (
    <g>
      <path d={`M${x} ${y - 60}V${y}H${x + 60}`} fill="none" stroke="#606162" strokeWidth="1.500" />
      <Letter x={x + 4.5} y={vy}>{v}</Letter>
      <Letter x={x + 64.5} y={y + (h === "y" ? -1.5 : 1.5)}>{h}</Letter>
    </g>
  );
}

function TopView() {
  const cx = 516.5;
  const cy = 374;
  const r = 361;
  const lines = Array.from({ length: 65 }, (_, i) => Math.round(170 + i * 10.84));
  const ring = Array.from({ length: 380 }, (_, i) => {
    const a = (i * 2 * Math.PI) / 380;
    return cross(Math.round(cx + Math.cos(a) * r), Math.round(cy + Math.sin(a) * r));
  }).join("");
  return (
    <svg className="h-full w-full" viewBox="0 0 1008 734">
      <g shapeRendering="crispEdges" fill={GREEN}>
        {lines.map((x) => {
          const k = Math.sqrt(Math.max(0, r * r - (x - cx) ** 2));
          return <rect key={x} x={x - 1} y={cy - k} width="3" height={2 * k} />;
        })}
      </g>
      <path d={ring} stroke={GREEN} strokeWidth="6.500" shapeRendering="crispEdges" />
      <Axes v="y" h="x" x={72.5} y={662} vy={601} />
    </svg>
  );
}

function PerspectiveView() {
  return (
    <svg className="h-full w-full" viewBox="1254 112 1002 734">
      <path
        shapeRendering="crispEdges"
        d="M1494.500 445C1496 405 1555 379 1613 379C1675 379 1724 405 1724 437V462C1722 500 1660 527 1600 527C1540 527 1494.500 500 1494.500 462Z"
        fill={GREEN}
      />
      <g fill="none" stroke="#9ea2aa" strokeWidth="1" shapeRendering="crispEdges">
        <path d="M1704 447Q1700 463 1687 473" strokeWidth="1.500" strokeDasharray="5 3" />
        <path d="M1694 467Q1670 488 1637 494" strokeDasharray="3 3" strokeWidth="1.500" />
        <path d="M1687 473l-6 4M1682 474l6 5M1676 477l4 6M1671 480l4 5M1665 484l-8 4" />
        <path d="M1637 494Q1620 498 1603 498" strokeDasharray="6 2" />
        <path d="M1598 498L1578 496.500" strokeDasharray="2 6" />
        <path d="M1622 381l6 4M1628 384l6-5M1635 384l6-4M1646 382l12 2M1674 389l8 5M1680 393l8 3" strokeDasharray="2 2" />
        <path d="M1556 491l2-1M1538 483h1M1542 485h1M1714 446l1 1M1690 500l2 1M1685 502l1-1M1681 500h1M1670 510h2M1704 485h1" />
      </g>
      <path d="M1326.300 724V774.300M1288.300 747L1326.300 774.300L1371.700 751.300" fill="none" stroke="#606162" strokeWidth="1.500" />
      <Letter x={1331} y={726}>z</Letter>
      <Letter x={1293} y={746}>y</Letter>
      <Letter x={1376} y={753}>x</Letter>
    </svg>
  );
}

function FrontView() {
  const nubs = [1250.7, 1261.5, 1272.5, 1283.5, 1294.5, 1305.3];
  const left = nubs.map((y) => `L335 ${y - 2}V${y + 2}L338.500 ${y + 5.5}`).join("");
  const right = [...nubs].reverse().map((y) => `L1109 ${y + 2}V${y - 2}L1105 ${y - 5.5}`).join("");
  const specks = [
    [1088, 1258], [1087, 1276], [1088, 1293], [1092, 1254], [1093, 1279], [1084, 1267], [1083, 1285], [1080, 1291],
    [1094, 1254], [1091, 1264], [1089, 1276], [1094, 1287], [1090, 1299], [1085, 1263], [1074, 1267], [1060, 1270],
    [1053, 1254], [1020, 1257], [1019, 1268], [1020, 1290], [1001, 1257], [988, 1254], [993, 1254], [897, 1257],
    [898, 1291], [934, 1266], [915, 1251], [807, 1261], [770, 1265], [753, 1257], [753, 1288], [626, 1268], [525, 1268],
    [593, 1257], [524, 1257], [422, 1268], [524, 1291], [593, 1291], [817, 1251], [1028, 1251], [963, 1279], [1075, 1289],
  ];
  return (
    <svg className="h-full w-full" viewBox="240 852 1008 728">
      <g shapeRendering="crispEdges">
        <path d={`M338.500 1246${left}V1310H1105${right}V1246Z`} fill={GREEN} />
        {specks.map(([x, y], i) => (
          <rect key={i} x={x} y={y} width={i < 3 ? 2 : 1} height={i < 3 ? 2 : 1} fill="#9ea2aa" />
        ))}
        <path d="M375 1246.500H1070M375 1309.500H1070" stroke="#9ea2aa" strokeWidth="1" strokeDasharray="1 7 1 12 1 4 2 9" />
      </g>
      <Axes v="z" h="x" x={312.5} y={1508.5} vy={1450} />
    </svg>
  );
}

const DENSE = Array.from({ length: 18 }, (_, i) => 158 + i * 3.2).concat([
  219, 227, 232, 240, 248, 252, 261, 268, 275, 280, 288, 292, 303, 312, 319, 326, 331, 337, 351, 359, 366, 374, 383, 388, 397, 401,
  409, 417, 423, 432, 439, 446, 453, 460,
]);
const COMMON = [
  487, 494, 503, 524, 532, 562, 569, 575, 583, 603, 613, 638, 645, 650, 655, 735, 748, 756, 775, 785, 792, 805,
  844, 864, 895, 909, 949, 964, 1004, 1019, 1061, 1076, 1086, 1119, 1134, 1167, 1180, 1195, 1241, 1289, 1299, 1306, 1313,
  1353, 1369, 1419, 1430, 1440, 1486, 1503, 1557,
];

function RightView() {
  const rows: [number, number[]][] = [
    [937.5, [689, 700, 854, 885]],
    [1037.5, [689, 700, 712, 723, 854]],
    [1136.5, [689, 700, 712, 720, 854]],
    [1236.5, [689, 700, 854, 885]],
    [1336.500, [689, 700, 712, 723, 854]],
  ];
  return (
    <svg className="h-full w-full" viewBox="1254 852 1002 728">
      <g stroke={GREEN} shapeRendering="crispEdges">
        {rows.map(([y, extra]) => (
          <g key={y}>
            <path d={`M1344 ${y}H2256`} strokeWidth="3" />
            <path d={[...DENSE, ...COMMON, ...extra].map((z) => cross(1240 + z / 1.5194, y)).join("")} strokeWidth="6.500" />
          </g>
        ))}
      </g>
      <Axes v="z" h="y" x={1326.3} y={1508.5} vy={1450} />
    </svg>
  );
}

function ViewportGrid() {
  return (
    <div className="grid h-[1468px] grid-cols-[1008px_1002px] grid-rows-[734px_728px] gap-[6px] bg-[#555755]">
      <div className="relative overflow-hidden bg-[#9ea2aa]"><TopView /><Title text="Top" className="w-[94px]" /></div>
      <div className="relative overflow-hidden bg-[#9ea2aa]"><PerspectiveView /><Title text="Perspective" active className="w-[192px]" /></div>
      <div className="relative overflow-hidden bg-[#9ea2aa]"><FrontView /><Title text="Front" className="w-[114px]" /></div>
      <div className="relative overflow-hidden bg-[#9ea2aa]"><RightView /><Title text="Right" className="w-[114px]" /></div>
    </div>
  );
}

function BottomTabs() {
  const tabs: [string, string][] = [
    ["Perspective", "w-[223px]"],
    ["Top", "w-[124px]"],
    ["Front", "w-[144px]"],
    ["Right", "w-[144px]"],
    ["Layouts...", "w-[160px]"],
  ];
  return (
    <div className="flex h-[18px] items-start overflow-hidden bg-[#404040] pl-5 pt-[11px]">
      <svg className="mr-[33px] h-6 w-[31px] shrink-0" viewBox="0 0 31 24">
        <path d="M1 1H30V23H1ZM15.500 1V23" fill="none" stroke="#3a84f7" strokeWidth="1.500" /><path d="M1 3H7M16 3H22" stroke="#3a84f7" strokeWidth="1.500" />
      </svg>
      <svg className="mr-[26px] h-6 w-[31px] shrink-0" viewBox="0 0 31 24">
        <path d="M1 1H30V23H1ZM1 3H7" fill="none" stroke="#a0a0a0" strokeWidth="1.500" />
      </svg>
      {tabs.map(([name, w]) => (
        <div key={name} className={`${w} mt-px shrink-0 border-l-2 border-[#888] pl-[38px] pt-[2px] text-[24px] leading-[20px] ${name === "Perspective" ? "text-[#3a84f7]" : "text-[#a0a0a0]"}`}>
          {name}
        </div>
      ))}
    </div>
  );
}

export default function App() {
  return (
    <div className="flex h-[1598px] w-[2272px] flex-col overflow-hidden bg-[#444444] font-['Inter',sans-serif]">
      <Defs />
      <div className="h-[11px] shrink-0 border-b border-black bg-[#3d3d3d]" />
      <div className="flex h-[95px] shrink-0">
        <div className="mr-[2px] w-2 shrink-0 bg-[#333333]" />
        <div className="w-[2262px] shrink-0">
          <TabBar />
          <Toolbar />
        </div>
      </div>
      <div className="mt-[6px] flex min-h-0 flex-1">
        <aside className="mr-[6px] flex w-[234px] shrink-0 flex-col overflow-hidden">
          <CommandPanel />
          <OsnapPanel />
        </aside>
        <main className="w-[2016px] shrink-0">
          <ViewportGrid />
          <BottomTabs />
        </main>
        <aside className="ml-[6px] w-[10px] overflow-hidden rounded-tl-[8px] bg-[#323232]">
          <div className="mt-10 h-[2px] bg-[#444444]" />
        </aside>
      </div>
    </div>
  );
}
